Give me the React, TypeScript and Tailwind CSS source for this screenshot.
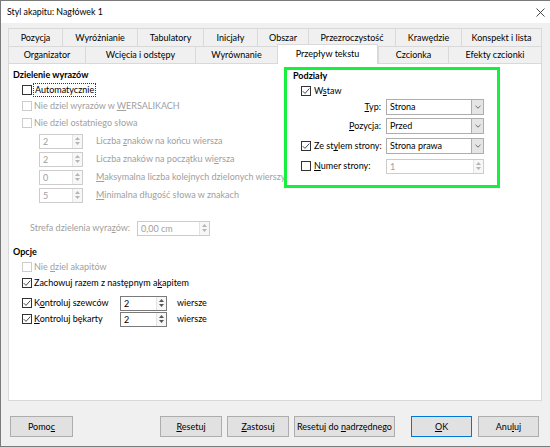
import type { ReactNode } from "react";

const FONT = "font-['Lato','Noto_Sans',sans-serif]";

const ROW1 = [
  { label: "Pozycja", w: "w-[54px]" },
  { label: "Wyróżnianie", w: "w-[75px]" },
  { label: "Tabulatory", w: "w-[66px]" },
  { label: "Inicjały", w: "w-[54px]" },
  { label: "Obszar", w: "w-[51px]" },
  { label: "Przezroczystość", w: "w-[87px]" },
  { label: "Krawędzie", w: "w-[66px]" },
  { label: "Konspekt i lista", w: "w-[81px]" },
];

const ROW2 = [
  { label: "Organizator", w: "w-[77px]" },
  { label: "Wcięcia i odstępy", w: "w-[110px]" },
  { label: "Wyrównanie", w: "w-[82px]" },
  { label: "Przepływ tekstu", w: "w-[101px]", active: true },
  { label: "Czcionka", w: "w-[70px]" },
  { label: "Efekty czcionki", w: "w-[94px]" },
];

/** podkreślona litera skrótu */
function U({ children }: { children: ReactNode }) {
  return <span className="underline underline-offset-[1px]">{children}</span>;
}

function Check({ checked, disabled }: { checked?: boolean; disabled?: boolean }) {
  return (
    <span
      className={`w-[10px] h-[10px] shrink-0 border bg-white flex items-center justify-center ${
        disabled ? "border-[#cccccc]" : "border-[#333333]"
      }`}
    >
      {checked && (
        <svg width="8" height="8" viewBox="0 0 8 8">
          <path d="M0.8 4.2 L3 6.4 L7.3 1.6" stroke="#333" strokeWidth="0.9" fill="none" />
        </svg>
      )}
    </span>
  );
}

function Spin({ value, w, disabled }: { value: string; w: string; disabled?: boolean }) {
  const tri = disabled ? "#b5b5b5" : "#555555";
  return (
    <div
      className={`${w} h-[15px] shrink-0 border bg-white flex ${
        disabled ? "border-[#cccccc] text-[#a0a0a0]" : "border-[#7a7a7a] text-black"
      }`}
    >
      <span className="flex-1 pl-[3px] leading-[13px]">{value}</span>
      <span className="w-[10px] flex flex-col items-center justify-center gap-[2px] bg-[#f7f7f7] border-l border-[#e3e3e3]">
        <svg width="5" height="3" viewBox="0 0 5 3">
          <path d="M0 3 L2.5 0 L5 3 Z" fill={tri} />
        </svg>
        <svg width="5" height="3" viewBox="0 0 5 3">
          <path d="M0 0 L2.5 3 L5 0 Z" fill={tri} />
        </svg>
      </span>
    </div>
  );
}

function Select({ value }: { value: string }) {
  return (
    <div className="w-[98px] h-[16px] shrink-0 border border-[#adadad] bg-white flex">
      <span className="flex-1 pl-[3px] leading-[14px]">{value}</span>
      <span className="w-[12px] bg-[#e5e5e5] border-l border-[#adadad] flex items-center justify-center">
        <svg width="6" height="4" viewBox="0 0 6 4">
          <path d="M0.5 0.8 L3 3.2 L5.5 0.8" stroke="#606060" strokeWidth="0.9" fill="none" />
        </svg>
      </span>
    </div>
  );
}

function Button({ children, w, primary }: { children: ReactNode; w: string; primary?: boolean }) {
  return (
    <div
      className={`${w} h-[21px] shrink-0 bg-[#e1e1e1] border flex items-center justify-center whitespace-nowrap ${
        primary ? "border-[#0078d7]" : "border-[#adadad]"
      }`}
    >
      {children}
    </div>
  );
}

export default function App() {
  const dis = "text-[#a0a0a0]";
  return (
    <div
      className={`${FONT} text-[9px] text-black w-[550px] h-[447px] bg-[#f0f0f0] border-t border-l border-b border-[#7a7a7a] flex flex-col overflow-hidden`}
    >
      {/* pasek tytułu */}
      <div className="h-[22px] bg-white flex items-center justify-between pl-[6px] pr-[5px] shrink-0">
        <span className="text-[8.8px]">Styl akapitu: Nagłówek 1</span>
        <svg width="9" height="9" viewBox="0 0 9 9">
          <path d="M0.5 0.5 L8.5 8.5 M8.5 0.5 L0.5 8.5" stroke="#333" strokeWidth="0.9" />
        </svg>
      </div>

      {/* zakładki */}
      <div className="mt-[5px] ml-[7px] w-[534px] shrink-0">
        <div className="flex h-[18px]">
          {ROW1.map((t, i) => (
            <div
              key={t.label}
              className={`${t.w} h-full border-t border-l border-[#d9d9d9] flex items-center justify-center ${
                i === ROW1.length - 1 ? "border-r" : ""
              }`}
            >
              {t.label}
            </div>
          ))}
        </div>
        <div className="flex h-[17px] items-end">
          {ROW2.map((t, i) =>
            t.active ? (
              <div
                key={t.label}
                className={`${t.w} h-[20px] relative top-[1px] z-10 bg-white border-t border-l border-r border-[#d9d9d9] flex items-center justify-center pb-[2px]`}
              >
                {t.label}
              </div>
            ) : (
              <div
                key={t.label}
                className={`${t.w} h-full border-t border-l border-[#d9d9d9] flex items-center justify-center ${
                  i === ROW2.length - 1 ? "border-r" : ""
                }`}
              >
                {t.label}
              </div>
            )
          )}
        </div>
      </div>

      {/* panel */}
      <div className="ml-[7px] w-[534px] h-[338px] shrink-0 bg-white border border-[#d9d9d9] flex">
        {/* lewa kolumna */}
        <div className="w-[275px] shrink-0 pl-[4px] pt-[4px] flex flex-col overflow-hidden whitespace-nowrap">
          <div className="h-[14px] flex items-center font-bold">Dzielenie wyrazów</div>
          <div className="h-[16px] flex items-center pl-[9px] gap-[1px]">
            <Check />
            <span className="border border-dotted border-[#333] px-[1px] leading-[12px]">Automatycznie</span>
          </div>
          <div className={`h-[16px] flex items-center pl-[9px] gap-[2px] ${dis}`}>
            <Check disabled />
            <span>
              Nie dziel wyrazów w <U>W</U>ERSALIKACH
            </span>
          </div>
          <div className={`mt-[1px] h-[16px] flex items-center pl-[9px] gap-[2px] ${dis}`}>
            <Check disabled />
            <span>Nie dziel ostatniego słowa</span>
          </div>
          <div className={`mt-[2px] h-[16px] flex items-center pl-[26px] gap-[13px] ${dis}`}>
            <Spin value="2" w="w-[44px]" disabled />
            <span>
              Liczba <U>z</U>naków na końcu wiersza
            </span>
          </div>
          <div className={`mt-[2px] h-[16px] flex items-center pl-[26px] gap-[13px] ${dis}`}>
            <Spin value="2" w="w-[44px]" disabled />
            <span>
              Liczba znaków na początku wi<U>e</U>rsza
            </span>
          </div>
          <div className={`mt-[2px] h-[16px] flex items-center pl-[26px] gap-[13px] ${dis}`}>
            <Spin value="0" w="w-[44px]" disabled />
            <span>
              <U>M</U>aksymalna liczba kolejnych dzielonych wierszy
            </span>
          </div>
          <div className={`mt-[2px] h-[16px] flex items-center pl-[26px] gap-[13px] ${dis}`}>
            <Spin value="5" w="w-[44px]" disabled />
            <span>
              <U>M</U>inimalna długość słowa w znakach
            </span>
          </div>
          <div className={`mt-[17px] h-[16px] flex items-center pl-[17px] ${dis}`}>
            <span className="w-[107px]">
              Strefa dzielenia wyra<U>z</U>ów:
            </span>
            <Spin value="0,00 cm" w="w-[73px]" disabled />
          </div>

          <div className="mt-[9px] h-[14px] flex items-center font-bold">Opcje</div>
          <div className={`h-[16px] flex items-center pl-[9px] gap-[2px] ${dis}`}>
            <Check disabled />
            <span>
              Nie <U>d</U>ziel akapitów
            </span>
          </div>
          <div className="h-[16px] flex items-center pl-[9px] gap-[2px]">
            <Check checked />
            <span>
              Zachowuj razem z następnym a<U>k</U>apitem
            </span>
          </div>
          <div className="mt-[4px] h-[16px] flex items-center pl-[9px]">
            <div className="w-[98px] flex items-center gap-[2px]">
              <Check checked />
              <span>
                K<U>o</U>ntroluj szewców
              </span>
            </div>
            <Spin value="2" w="w-[47px]" />
            <span className="ml-[10px]">wiersze</span>
          </div>
          <div className="h-[16px] flex items-center pl-[9px]">
            <div className="w-[98px] flex items-center gap-[2px]">
              <Check checked />
              <span>
                <U>K</U>ontroluj bękarty
              </span>
            </div>
            <Spin value="2" w="w-[47px]" />
            <span className="ml-[10px]">wiersze</span>
          </div>
        </div>

        {/* prawa grupa – Podziały */}
        <div className="mt-[3px] w-[216px] h-[121px] shrink-0 border-[3px] border-[#14f03c] flex flex-col whitespace-nowrap">
          <div className="h-[11px] pl-[6px] flex items-center font-bold">Podziały</div>
          <div className="mt-[2px] h-[16px] pl-[14px] flex items-center gap-[3px]">
            <Check checked />
            <span>
              W<U>s</U>taw
            </span>
          </div>
          <div className="h-[16px] flex items-center">
            <span className="w-[95px] text-right pr-[1px]">
              <U>T</U>yp:
            </span>
            <span className="ml-[4px]">
              <Select value="Strona" />
            </span>
          </div>
          <div className="mt-[3px] h-[16px] flex items-center">
            <span className="w-[95px] text-right pr-[1px]">
              <U>P</U>ozycja:
            </span>
            <span className="ml-[4px]">
              <Select value="Przed" />
            </span>
          </div>
          <div className="mt-[4px] h-[16px] flex items-center">
            <div className="w-[95px] pl-[14px] flex items-center gap-[3px]">
              <Check checked />
              <span>
                Ze st<U>y</U>lem strony:
              </span>
            </div>
            <span className="ml-[4px]">
              <Select value="Strona prawa" />
            </span>
          </div>
          <div className="mt-[4px] h-[16px] flex items-center">
            <div className="w-[95px] pl-[14px] flex items-center gap-[3px]">
              <Check />
              <span>
                <U>N</U>umer strony:
              </span>
            </div>
            <span className="ml-[4px]">
              <Spin value="1" w="w-[98px]" disabled />
            </span>
          </div>
        </div>
      </div>

      {/* przyciski */}
      <div className="mt-[15px] flex items-center pl-[9px]">
        <Button w="w-[63px]">
          <span>
            Pomo<U>c</U>
          </span>
        </Button>
        <div className="ml-[87px] flex gap-[5px]">
          <Button w="w-[62px]">
            <span>
              <U>R</U>esetuj
            </span>
          </Button>
          <Button w="w-[62px]">
            <span>
              <U>Z</U>astosuj
            </span>
          </Button>
          <Button w="w-[101px]">
            <span>
              Resetuj do <U>n</U>adrzędnego
            </span>
          </Button>
        </div>
        <div className="ml-[16px] flex gap-[6px]">
          <Button w="w-[61px]" primary>
            <span>
              <U>O</U>K
            </span>
          </Button>
          <Button w="w-[61px]">
            <span>
              Anu<U>l</U>uj
            </span>
          </Button>
        </div>
      </div>
    </div>
  );
}
